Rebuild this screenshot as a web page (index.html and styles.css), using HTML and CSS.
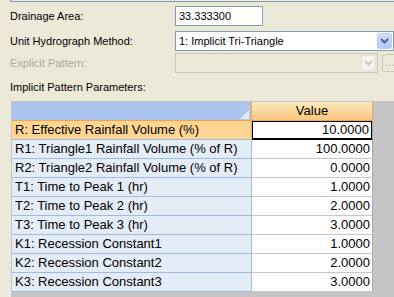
FILE: index.html
```html
<!DOCTYPE html>
<html lang="en">
<head>
    <meta charset="UTF-8">
    <title>Unit Hydrograph</title>
    <link rel="stylesheet" href="styles.css">
</head>
<body>
    <div class="topedge"></div>

    <div class="form">
        <div class="row">
            <span class="lbl">Drainage Area:</span>
            <div class="textbox">33.333300</div>
        </div>
        <div class="row r2">
            <span class="lbl">Unit Hydrograph Method:</span>
            <div class="combo">
                <span class="combo-text">1: Implicit Tri-Triangle</span>
                <span class="drop">
                    <svg width="9" height="6" viewBox="0 0 9 6"><path d="M1 1 L4.5 4.5 L8 1" fill="none" stroke="#4d6185" stroke-width="2"/></svg>
                </span>
            </div>
        </div>
        <div class="row r3">
            <span class="lbl off">Explicit Pattern:</span>
            <div class="combo combo-off">
                <span class="combo-text"></span>
                <span class="drop">
                    <svg width="9" height="6" viewBox="0 0 9 6"><path d="M1 1 L4.5 4.5 L8 1" fill="none" stroke="#c9c7ba" stroke-width="2"/></svg>
                </span>
            </div>
            <span class="dots">...</span>
        </div>
        <div class="section">Implicit Pattern Parameters:</div>
    </div>

    <div class="grid">
        <div class="grid-row head">
            <div class="rh corner">
                <svg width="9" height="9" viewBox="0 0 9 9"><path d="M9 0 L9 9 L0 9 Z" fill="#e6edf9"/></svg>
            </div>
            <div class="ch">Value</div>
        </div>
        <div class="grid-row sel">
            <div class="rh">R: Effective Rainfall Volume (%)</div>
            <div class="val">10.0000</div>
        </div>
        <div class="grid-row">
            <div class="rh">R1: Triangle1 Rainfall Volume (% of R)</div>
            <div class="val">100.0000</div>
        </div>
        <div class="grid-row">
            <div class="rh">R2: Triangle2 Rainfall Volume (% of R)</div>
            <div class="val">0.0000</div>
        </div>
        <div class="grid-row">
            <div class="rh">T1: Time to Peak 1 (hr)</div>
            <div class="val">1.0000</div>
        </div>
        <div class="grid-row">
            <div class="rh">T2: Time to Peak 2 (hr)</div>
            <div class="val">2.0000</div>
        </div>
        <div class="grid-row">
            <div class="rh">T3: Time to Peak 3 (hr)</div>
            <div class="val">3.0000</div>
        </div>
        <div class="grid-row">
            <div class="rh">K1: Recession Constant1</div>
            <div class="val">1.0000</div>
        </div>
        <div class="grid-row">
            <div class="rh">K2: Recession Constant2</div>
            <div class="val">2.0000</div>
        </div>
        <div class="grid-row">
            <div class="rh">K3: Recession Constant3</div>
            <div class="val">3.0000</div>
        </div>
    </div>
</body>
</html>
```

FILE: styles.css
```css
html, body {
    margin: 0;
    height: 100%;
    overflow: hidden;
}
body {
    background: #ece9d8;
    font-family: "Liberation Sans", Arial, sans-serif;
    font-size: 11px;
    color: #000;
}
.topedge {
    margin-left: 10px;
    height: 1px;
    border-left: 1px solid #7f9db9;
    border-bottom: 1px solid #7f9db9;
}
.form {
    padding: 4px 0 0 10px;
}
.row {
    display: flex;
    align-items: center;
    height: 20px;
}
.r2 { margin-top: 5px; }
.r3 { margin-top: 2px; }
.lbl {
    width: 165px;
    flex: none;
    white-space: nowrap;
}
.lbl.off { color: #aca899; }
.textbox {
    box-sizing: border-box;
    width: 88px;
    height: 20px;
    line-height: 18px;
    padding-left: 3px;
    background: #fff;
    border: 1px solid #7f9db9;
}
.combo {
    box-sizing: border-box;
    display: flex;
    align-items: stretch;
    width: 219px;
    height: 20px;
    padding: 1px;
    background: #fff;
    border: 1px solid #7f9db9;
    flex: none;
}
.combo-text {
    flex: 1;
    line-height: 16px;
    padding-left: 2px;
    white-space: nowrap;
}
.drop {
    box-sizing: border-box;
    width: 15px;
    display: flex;
    align-items: center;
    justify-content: center;
    background: linear-gradient(#d0dcfc, #b5c8f7);
    border: 1px solid #bccdf9;
    border-radius: 2px;
}
.combo-off {
    width: 203px;
    background: #ece9d8;
    border-color: #c9c7ba;
}
.combo-off .drop {
    background: #f4f3ee;
    border-color: #e2e0d6;
}
.dots {
    box-sizing: border-box;
    margin-left: 4px;
    width: 12px;
    height: 18px;
    line-height: 14px;
    padding-left: 2px;
    color: #aca899;
    border: 1px solid #c9c7ba;
    border-right: none;
    border-radius: 3px 0 0 3px;
    flex: none;
    overflow: hidden;
}
.section {
    margin-top: 7px;
    height: 14px;
    line-height: 14px;
}
.grid {
    margin: 7px 0 0 11px;
    padding: 1px 0 0 1px;
    height: 200px;
    background: #c5c5c5;
    font-size: 13px;
}
.grid-row {
    display: grid;
    grid-template-columns: 240px 121px;
}
.rh, .val, .ch {
    height: 18px;
    line-height: 18px;
    white-space: nowrap;
    overflow: hidden;
}
.rh {
    padding-left: 3px;
    background: #e4ecf7;
    border-right: 1px solid #a2bbdb;
    border-bottom: 1px solid #a2bbdb;
}
.val {
    padding-right: 2px;
    text-align: right;
    background: #fff;
    border-right: 1px solid #a9a9a9;
    border-bottom: 1px solid #c8c8c8;
}
.head .rh {
    display: flex;
    justify-content: flex-end;
    align-items: flex-end;
    padding: 0 2px 1px 0;
    height: 17px;
    background: #aac4ee;
    border-right-color: #f7a341;
    border-bottom-color: #f7a341;
}
.ch {
    text-align: center;
    background: linear-gradient(#fde7bd, #f9c77e);
    border-right: 1px solid #f7a341;
    border-bottom: 1px solid #f7a341;
}
.sel .rh {
    background: #fed694;
    border-right-color: #f7a341;
}
.sel .val {
    box-shadow: inset 1px 1px 0 #000, inset -1px -1px 0 #000;
    border-bottom: 1px solid #000;
    padding-right: 3px;
}
```
